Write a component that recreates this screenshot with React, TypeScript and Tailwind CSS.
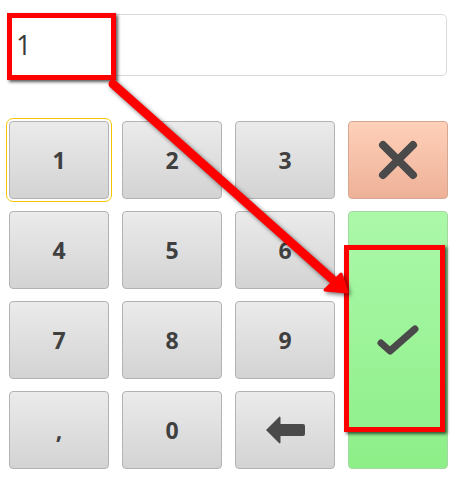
const keyBase =
  "flex items-center justify-center rounded-[4px] border text-[23px] font-bold text-[#404040]";
const grayKey =
  keyBase + " border-[#b3b3b3] bg-gradient-to-b from-[#ebebeb] to-[#d3d3d3]";

function Key({ label, focused }: { label: string; focused?: boolean }) {
  return (
    <button
      className={
        grayKey +
        (focused ? " outline outline-1 outline-offset-[2px] outline-[#f5c400]" : "")
      }
    >
      {label}
    </button>
  );
}

export default function App() {
  return (
    <div
      className="relative w-[462px] h-[484px] bg-white overflow-hidden"
      style={{ fontFamily: '"Open Sans", "Noto Sans", sans-serif' }}
    >
      <div className="pt-[14px] pl-[8px]">
        {/* Display */}
        <div className="w-[439px] h-[62px] border border-[#dadada] rounded-[5px] flex items-center pl-[7px] text-[27px] text-[#3a3a3a]">
          1
        </div>

        {/* Keypad */}
        <div className="mt-[45px] ml-px grid grid-cols-[repeat(4,100px)] grid-rows-[repeat(4,78px)] gap-x-[13px] gap-y-[12px]">
          <Key label="1" focused />
          <Key label="2" />
          <Key label="3" />
          <button className={keyBase + " border-[#d6a893] bg-gradient-to-b from-[#ffd0b9] to-[#eeb198]"}>
            <svg width="40" height="40" viewBox="0 0 40 40">
              <path d="M5 5 L35 35 M35 5 L5 35" stroke="#4a4a4a" strokeWidth="8" strokeLinecap="round" />
            </svg>
          </button>

          <Key label="4" />
          <Key label="5" />
          <Key label="6" />
          <button className={keyBase + " row-span-3 border-[#a3d9a0] bg-gradient-to-b from-[#abf8a9] to-[#8def88]"}>
            <svg width="44" height="30" viewBox="0 0 44 30">
              <path d="M5 18 L14 26 L39 4" fill="none" stroke="#4a4a4a" strokeWidth="7" strokeLinecap="round" strokeLinejoin="round" />
            </svg>
          </button>

          <Key label="7" />
          <Key label="8" />
          <Key label="9" />

          <Key label="," />
          <Key label="0" />
          <button className={grayKey}>
            <svg width="40" height="30" viewBox="0 0 40 30">
              <path
                d="M1 15 L14 2 Q15 1 15.5 2.5 L15.5 9 L38 9 Q40 9 40 11 L40 19 Q40 21 38 21 L15.5 21 L15.5 27.5 Q15 29 14 28 Z"
                fill="#4a4a4a"
              />
            </svg>
          </button>
        </div>
      </div>

      {/* Annotations */}
      <div className="absolute left-[7px] top-[13px] w-[109px] h-[67px] border-[5px] border-[#ff0000] shadow-[2px_2px_3px_rgba(0,0,0,0.65)]" />
      <div className="absolute left-[344px] top-[245px] w-[101px] h-[187px] border-[5px] border-[#ff0000] shadow-[2px_2px_3px_rgba(0,0,0,0.65)]" />
      <svg
        className="absolute left-0 top-0 drop-shadow-[2px_2px_2px_rgba(0,0,0,0.55)]"
        width="462"
        height="484"
        viewBox="0 0 462 484"
      >
        <line x1="113" y1="84" x2="332" y2="279" stroke="#ff0000" strokeWidth="9" strokeLinecap="round" />
        <polygon points="347,292 325,290 341,274" fill="#ff0000" stroke="#ff0000" strokeWidth="3" strokeLinejoin="round" />
      </svg>
    </div>
  );
}
